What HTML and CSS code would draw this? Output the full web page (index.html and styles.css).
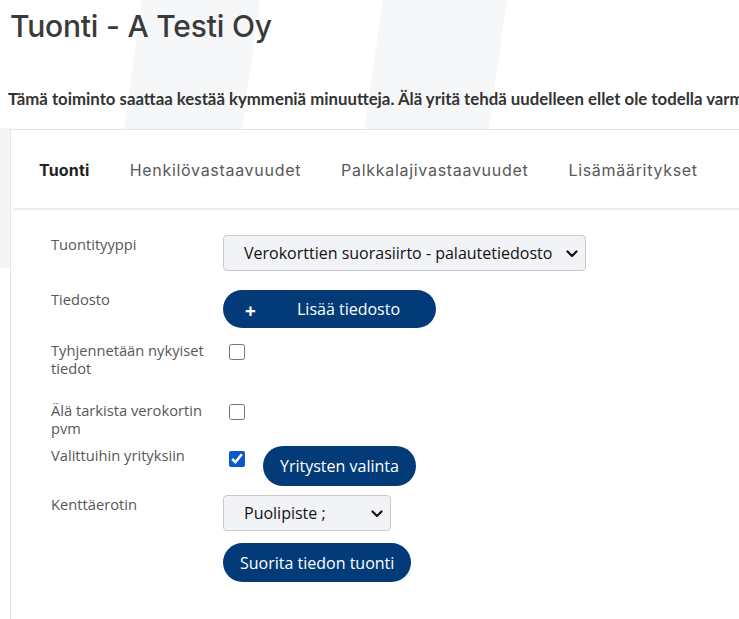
FILE: index.html
```html
<!DOCTYPE html>
<html lang="fi">

<head>
    <meta charset="UTF-8">
    <meta name="viewport" content="width=device-width, initial-scale=1.0">
    <title>Tuonti - A Testi Oy</title>
    <link rel="stylesheet" href="styles.css">
</head>

<body>
    <div class="page">
        <h1 class="page__title">Tuonti - A Testi Oy</h1>
        <p class="page__warning">Tämä toiminto saattaa kestää kymmeniä minuutteja. Älä yritä tehdä uudelleen ellet ole todella varma, että edellinen tuonti on epäonnistunut.</p>

        <section class="card">
            <nav class="tabs">
                <a class="tabs__item tabs__item--active" href="#">Tuonti</a>
                <a class="tabs__item" href="#">Henkilövastaavuudet</a>
                <a class="tabs__item" href="#">Palkkalajivastaavuudet</a>
                <a class="tabs__item" href="#">Lisämääritykset</a>
            </nav>

            <form class="import-form" method="POST">
                <label class="import-form__label" for="importType">Tuontityyppi</label>
                <div class="import-form__field">
                    <div class="select-wrap">
                        <select class="select select--wide" id="importType" name="importType">
                            <option>Verokorttien suorasiirto - palautetiedosto</option>
                            <option>Verokorttien suorasiirto - pyyntötiedosto</option>
                        </select>
                        <svg class="select-wrap__arrow" viewBox="0 0 12 8" aria-hidden="true">
                            <path d="M1.5 1.5 6 6l4.5-4.5" />
                        </svg>
                    </div>
                </div>

                <span class="import-form__label">Tiedosto</span>
                <div class="import-form__field">
                    <button type="button" class="btn btn--file">
                        <span class="btn__plus">+</span>
                        <span>Lisää tiedosto</span>
                    </button>
                </div>

                <label class="import-form__label" for="clearData">Tyhjennetään nykyiset tiedot</label>
                <div class="import-form__field">
                    <input class="checkbox" type="checkbox" id="clearData" name="clearData">
                </div>

                <label class="import-form__label" for="skipDate">Älä tarkista verokortin pvm</label>
                <div class="import-form__field">
                    <input class="checkbox" type="checkbox" id="skipDate" name="skipDate">
                </div>

                <label class="import-form__label" for="selectedCompanies">Valittuihin yrityksiin</label>
                <div class="import-form__field">
                    <input class="checkbox checkbox--low" type="checkbox" id="selectedCompanies" name="selectedCompanies" checked>
                    <button type="button" class="btn btn--companies">Yritysten valinta</button>
                </div>

                <label class="import-form__label" for="separator">Kenttäerotin</label>
                <div class="import-form__field">
                    <div class="select-wrap">
                        <select class="select select--narrow" id="separator" name="separator">
                            <option>Puolipiste ;</option>
                            <option>Pilkku ,</option>
                            <option>Sarkain</option>
                        </select>
                        <svg class="select-wrap__arrow" viewBox="0 0 12 8" aria-hidden="true">
                            <path d="M1.5 1.5 6 6l4.5-4.5" />
                        </svg>
                    </div>
                </div>

                <span class="import-form__label"></span>
                <div class="import-form__field">
                    <button type="submit" class="btn">Suorita tiedon tuonti</button>
                </div>
            </form>
        </section>
    </div>
</body>

</html>
```

FILE: styles.css
```css
:root {
    --navy: #033b79;
    --text: #3a3a3a;
    --muted: #585858;
    --line: #ececec;
}

html,
body {
    overflow-x: hidden;
}

body {
    margin: 0;
    color: var(--text);
    font-family: "Open Sans", "Liberation Sans", Arial, sans-serif;
    background-color: #fff;
    /* faint brand stripes behind the header */
    background-image:
        linear-gradient(98deg, transparent 18.3%, #f6f7f9 18.3%, #f6f7f9 33.5%, transparent 33.5%,
            transparent 49.3%, #f6f7f9 49.3%, #f6f7f9 65.3%, transparent 65.3%),
        linear-gradient(#f4f5f7, #f4f5f7);
    background-size: 739px 265px, 12px 140px;
    background-position: 0 0, 0 128px;
    background-repeat: no-repeat;
}

.page {
    padding: 0 0 0 10px;
}

.page__title {
    margin: 0;
    padding-top: 7px;
    font-family: Inter, "Liberation Sans", sans-serif;
    font-size: 30px;
    font-weight: 500;
    line-height: 38px;
    letter-spacing: -0.2px;
    color: var(--text);
}

.page__warning {
    margin: 44px 0 0 -2px;
    font-family: Lato, "Liberation Sans", sans-serif;
    font-size: 16.8px;
    font-weight: 700;
    line-height: 20px;
    white-space: nowrap;
    color: #333;
}

.card {
    width: 900px;
    min-height: 520px;
    margin-top: 20px;
    background: #fff;
    border: 1px solid #e4e4e4;
}

.tabs {
    display: flex;
    gap: 40px;
    height: 78px;
    align-items: center;
    margin-left: 2px;
    padding-left: 26px;
    border-bottom: 2px solid var(--line);
}

.tabs__item {
    font-family: Inter, "Liberation Sans", sans-serif;
    font-size: 16px;
    letter-spacing: 0.7px;
    color: var(--muted);
    text-decoration: none;
    padding-top: 2px;
}

.tabs__item--active {
    font-weight: 700;
    letter-spacing: 0.2px;
    color: #222;
}

.import-form {
    display: grid;
    grid-template-columns: 172px 1fr;
    grid-template-rows: 55px 51px 60px 45px 49px 48px auto;
    padding: 25px 0 40px 40px;
}

.import-form__label {
    width: 166px;
    font-size: 14.7px;
    line-height: 18px;
    color: var(--muted);
}

.import-form__field {
    display: flex;
    align-items: flex-start;
}

.select-wrap {
    position: relative;
}

.select-wrap__arrow {
    position: absolute;
    top: 15px;
    right: 8px;
    width: 12px;
    height: 8px;
    fill: none;
    stroke: #111;
    stroke-width: 2.2;
    stroke-linecap: round;
    stroke-linejoin: round;
    pointer-events: none;
}

.select {
    display: block;
    height: 36px;
    padding: 0 28px 0 20px;
    font-family: "Open Sans", "Liberation Sans", Arial, sans-serif;
    font-size: 16px;
    color: #111;
    background-color: #f2f3f6;
    border: 1px solid #c9c9c9;
    border-radius: 4px;
    appearance: none;
}

.select--wide {
    width: 363px;
}

.select--narrow {
    width: 168px;
}

.checkbox {
    width: 16px;
    height: 16px;
    margin: 3px 0 0 6px;
    accent-color: #0b57d0;
}

.checkbox--low {
    margin-top: 5px;
}

.btn {
    height: 39px;
    padding: 0 17px;
    font-family: "Open Sans", "Liberation Sans", Arial, sans-serif;
    font-size: 16px;
    color: #fff;
    background: var(--navy);
    border: 0;
    border-radius: 20px;
    cursor: pointer;
}

.btn--file {
    display: flex;
    align-items: center;
    width: 213px;
    height: 38px;
    padding-left: 22px;
}

.btn__plus {
    width: 11px;
    margin: 4px 41px 0 0;
    font-size: 19px;
    font-weight: 700;
}

.btn--companies {
    height: 40px;
    margin-left: 18px;
}
```
